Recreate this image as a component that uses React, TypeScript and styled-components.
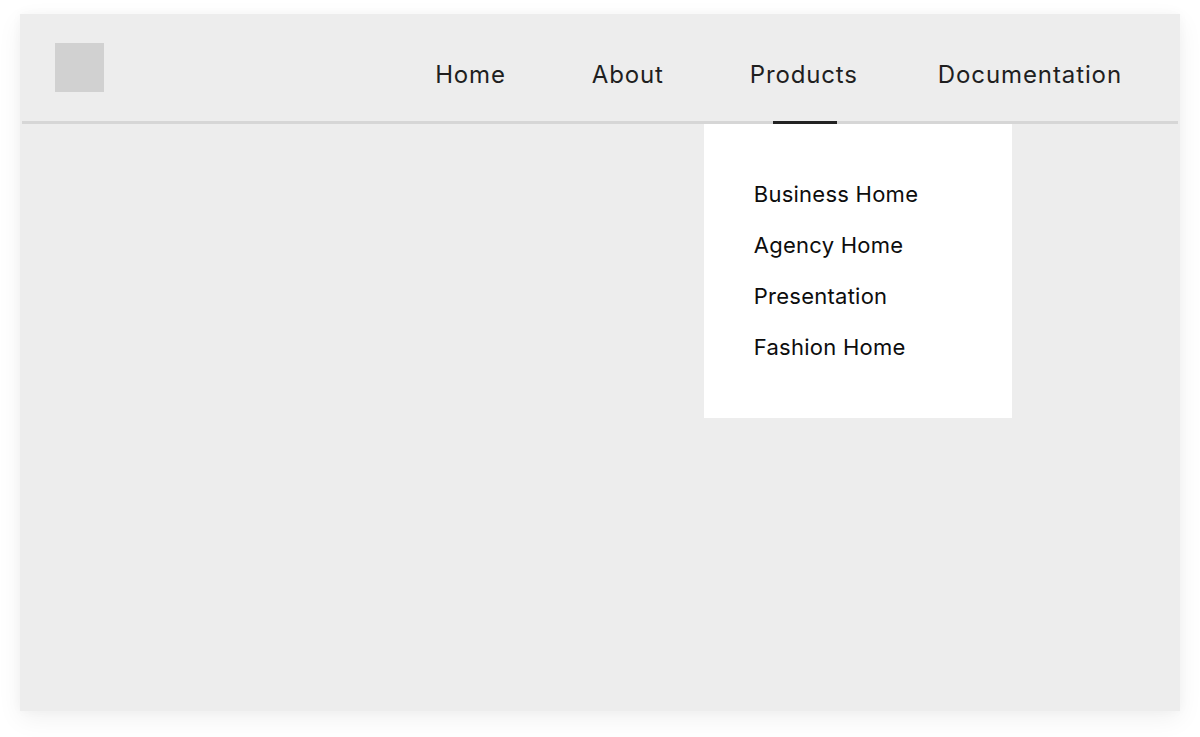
import React from "react";
import styled, { createGlobalStyle } from "styled-components";

const Global = createGlobalStyle`
  html, body { margin: 0; padding: 0; background: #ffffff; }
  body { font-family: "Inter", "Noto Sans", sans-serif; }
  * { box-sizing: border-box; }
`;

const Page = styled.div`
  width: 1200px;
  height: 737px;
  padding: 14px 20px 26px;
`;

const Card = styled.div`
  width: 1160px;
  height: 697px;
  background: #ededed;
  box-shadow: 0 8px 24px rgba(0, 0, 0, 0.06), 0 0 10px rgba(0, 0, 0, 0.03);
`;

const Header = styled.header`
  height: 110px;
  margin: 0 2px 0 2px;
  padding: 0 13px 0 33px;
  display: flex;
  align-items: center;
  justify-content: space-between;
  border-bottom: 3px solid #d6d6d6;
`;

const Logo = styled.div`
  width: 49px;
  height: 49px;
  background: #d1d1d1;
`;

const Nav = styled.nav`
  display: flex;
  align-self: stretch;
`;

const NavItem = styled.div<{ $active?: boolean }>`
  position: relative;
  display: flex;
  align-items: center;
  justify-content: center;
  padding: 14px 43px 0;
  font-size: 24px;
  letter-spacing: 0.85px;
  color: #1f1f1f;
  cursor: pointer;

  &:last-child {
    padding-left: 37px;
    letter-spacing: 0.9px;
  }

  &::after {
    content: "";
    display: ${(p) => (p.$active ? "block" : "none")};
    position: absolute;
    left: 50%;
    bottom: -3px;
    width: 64px;
    margin-left: -31px;
    height: 3px;
    background: #222222;
  }
`;

const Dropdown = styled.ul`
  position: absolute;
  top: calc(100% + 3px);
  left: -3px;
  width: 308px;
  margin: 0;
  padding: 56px 50px 57px;
  list-style: none;
  background: #ffffff;
  display: flex;
  flex-direction: column;
  gap: 23px;
`;

const DropItem = styled.li`
  font-size: 22px;
  line-height: 28px;
  letter-spacing: 0.25px;
  color: #0d0d0d;
  white-space: nowrap;
`;

const links = ["Home", "About", "Products", "Documentation"];
const products = ["Business Home", "Agency Home", "Presentation", "Fashion Home"];

export default function App() {
  return (
    <>
      <Global />
      <Page>
        <Card>
          <Header>
            <Logo />
            <Nav>
              {links.map((l) => (
                <NavItem key={l} $active={l === "Products"}>
                  {l}
                  {l === "Products" && (
                    <Dropdown>
                      {products.map((p) => (
                        <DropItem key={p}>{p}</DropItem>
                      ))}
                    </Dropdown>
                  )}
                </NavItem>
              ))}
            </Nav>
          </Header>
        </Card>
      </Page>
    </>
  );
}
